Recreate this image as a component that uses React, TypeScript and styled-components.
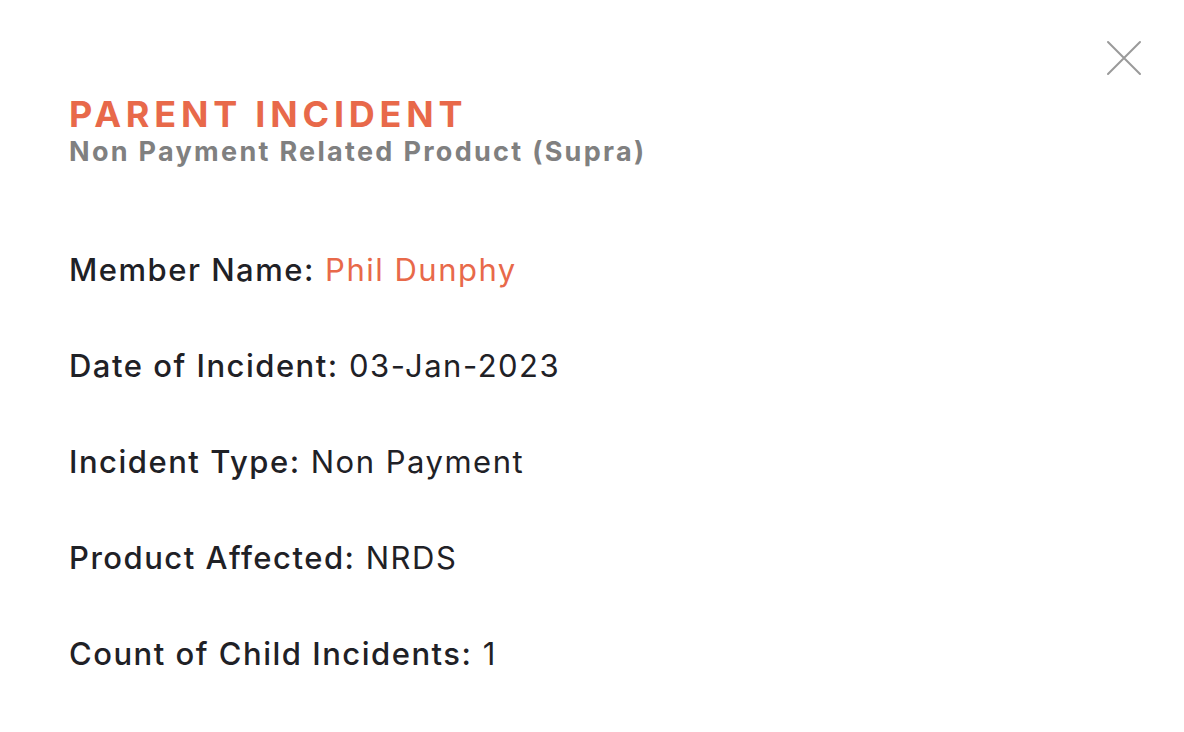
import React from 'react';
import styled, { createGlobalStyle } from 'styled-components';

const GlobalStyle = createGlobalStyle`
  html, body {
    margin: 0;
    padding: 0;
    background: #ffffff;
  }
  body {
    font-family: Inter, "Open Sans", "Liberation Sans", sans-serif;
  }
`;

const details = [
  { label: 'Member Name:', value: 'Phil Dunphy', accent: true },
  { label: 'Date of Incident:', value: '03-Jan-2023' },
  { label: 'Incident Type:', value: 'Non Payment' },
  { label: 'Product Affected:', value: 'NRDS' },
  { label: 'Count of Child Incidents:', value: '1' },
];

const App: React.FC = () => {
  return (
    <>
      <GlobalStyle />
      <Modal>
        <CloseButton aria-label="Close">
          <svg width="36" height="36" viewBox="0 0 36 36">
            <path d="M2 2 L34 34 M34 2 L2 34" stroke="#9a9a9a" strokeWidth="2" strokeLinecap="round" />
          </svg>
        </CloseButton>
        <Header>
          <Title>PARENT INCIDENT</Title>
          <Subtitle>Non Payment Related Product (Supra)</Subtitle>
        </Header>
        <DetailList>
          {details.map((d) => (
            <DetailRow key={d.label}>
              <Label>{d.label}</Label> <Value $accent={d.accent}>{d.value}</Value>
            </DetailRow>
          ))}
        </DetailList>
      </Modal>
    </>
  );
};

export default App;

const Modal = styled.div`
  position: relative;
  width: 1184px;
  height: 732px;
  box-sizing: border-box;
  padding: 92px 69px 0;
  background: #ffffff;
  display: flex;
  flex-direction: column;
`;

const CloseButton = styled.button`
  position: absolute;
  top: 40px;
  right: 42px;
  padding: 0;
  border: none;
  background: transparent;
  cursor: pointer;
  line-height: 0;
`;

const Header = styled.div`
  display: flex;
  flex-direction: column;
`;

const Title = styled.h1`
  margin: 0;
  font-size: 36px;
  line-height: 44px;
  font-weight: 700;
  letter-spacing: 4.8px;
  color: #e8694a;
`;

const Subtitle = styled.h2`
  margin: 0;
  font-size: 27px;
  line-height: 32px;
  font-weight: 700;
  letter-spacing: 2.3px;
  color: #808080;
`;

const DetailList = styled.div`
  margin-top: 82px;
  display: flex;
  flex-direction: column;
  gap: 56px;
`;

const DetailRow = styled.div`
  font-size: 31px;
  line-height: 40px;
  letter-spacing: 1.5px;
  color: #1f2126;
  white-space: nowrap;
`;

const Label = styled.span`
  font-weight: 500;
`;

const Value = styled.span<{ $accent?: boolean }>`
  font-weight: 400;
  color: ${({ $accent }) => ($accent ? '#e8694a' : '#1f2126')};
`;
